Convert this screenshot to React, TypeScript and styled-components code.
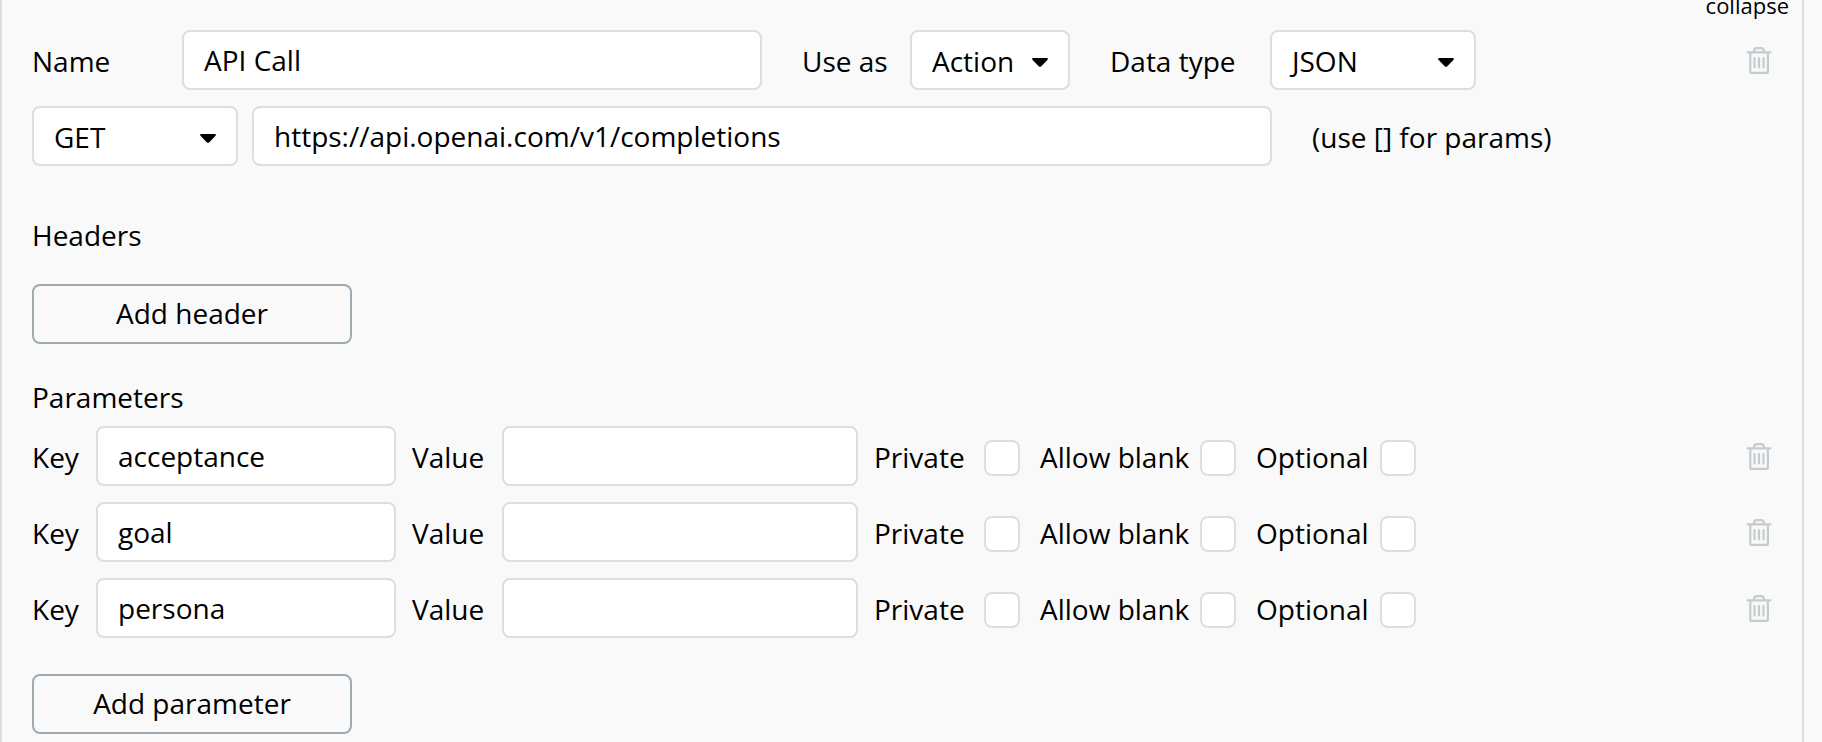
import React from "react";
import styled, { createGlobalStyle } from "styled-components";

const GlobalStyle = createGlobalStyle`
  * { box-sizing: border-box; }
  body {
    margin: 0;
    background: #f9f9f9;
    color: #000;
    font: 28px/38px "Open Sans", "Noto Sans", sans-serif;
    overflow: hidden;
  }
  input, button { font: inherit; color: inherit; }
`;

const Panel = styled.main`
  width: 1804px;
  height: 742px;
  padding: 0 30px;
  overflow: hidden;
  background: #f9f9f9;
  border: solid #dedede;
  border-width: 0 2px;
`;

const TopBar = styled.div`
  display: flex;
  justify-content: flex-end;
  height: 30px;
  margin-right: -17px;
`;

const Collapse = styled.a`
  margin-top: -10px;
  font-size: 22px;
  line-height: 30px;
`;

const Row = styled.div`
  display: flex;
  align-items: center;
  height: 60px;
  margin-bottom: 16px;
`;

const Label = styled.label<{ $width?: number; $indent?: number }>`
  flex: none;
  width: ${(p) => (p.$width ? `${p.$width}px` : "auto")};
  padding: 2px 0 0 ${(p) => p.$indent ?? 0}px;
  white-space: nowrap;
`;

const TextInput = styled.input<{ $width: number }>`
  flex: none;
  width: ${(p) => p.$width}px;
  height: 60px;
  padding: 0 20px;
  background: #fff;
  border: 2px solid #dedede;
  border-radius: 8px;
  outline: none;
`;

const SelectBox = styled.div<{ $width: number }>`
  display: flex;
  flex: none;
  align-items: center;
  justify-content: space-between;
  width: ${(p) => p.$width}px;
  height: 60px;
  padding: 2px 20px 0;
  background: #fff;
  border: 2px solid #dedede;
  border-radius: 8px;
`;

const UrlInput = styled(TextInput)`
  margin-left: 14px;
`;

const CheckBox = styled.span`
  flex: none;
  width: 36px;
  height: 36px;
  margin-top: 4px;
  background: #fff;
  border: 2px solid #dedede;
  border-radius: 8px;
`;

const DeleteButton = styled.button`
  display: flex;
  flex: none;
  margin: 2px 0 0 auto;
  padding: 0;
  background: none;
  border: 0;
`;

const SectionTitle = styled.h2`
  margin: 0;
  font-size: 28px;
  font-weight: 400;
  line-height: 38px;
`;

const HeadersSection = styled.section`
  padding-top: 34px;
`;

const ParametersSection = styled.section`
  padding-top: 34px;
`;

const ParameterList = styled.div`
  padding-top: 10px;
`;

const OutlineButton = styled.button<{ $gap: number }>`
  display: block;
  width: 320px;
  height: 60px;
  margin-top: ${(p) => p.$gap}px;
  padding: 0 0 2px;
  background: transparent;
  border: 2px solid #9eabb2;
  border-radius: 8px;
`;

const CaretIcon = styled.svg`
  flex: none;
  margin-top: 3px;
`;

const Caret = () => (
  <CaretIcon width="16" height="9" viewBox="0 0 16 9">
    <path d="M.8 0h14.4q1 .6.4 1.700L9.300 8.200Q8 9.400 6.700 8.200L.4 1.700Q-.2.6.8 0z" fill="#000" />
  </CaretIcon>
);

const Trash = () => (
  <svg width="26" height="28" viewBox="0 0 26 28" fill="none" stroke="#c3cdd0" strokeWidth="2.2" strokeLinecap="round" strokeLinejoin="round">
    <path d="M1.500 5.300h23M8 5V3.800Q8.500 1.200 11 1.200h4Q17.500 1.200 18 3.800V5M4.300 6v18.400q0 1.500 1.500 1.500h14.600q1.500 0 1.500-1.500V6" />
    <path d="M8.500 11v9.500M13 11v9.500M17.500 11v9.500" />
  </svg>
);

const Select = ({ value, width }: { value: string; width: number }) => (
  <SelectBox $width={width}>
    {value}
    <Caret />
  </SelectBox>
);

const ParameterRow = ({ name }: { name: string }) => (
  <Row>
    <Label $width={64}>Key</Label>
    <TextInput $width={300} defaultValue={name} />
    <Label $width={106} $indent={16}>Value</Label>
    <TextInput $width={356} />
    <Label $width={126} $indent={16}>Private</Label>
    <CheckBox />
    <Label $width={180} $indent={20}>Allow blank</Label>
    <CheckBox />
    <Label $width={144} $indent={20}>Optional</Label>
    <CheckBox />
    <DeleteButton><Trash /></DeleteButton>
  </Row>
);

export default function App() {
  return (
    <>
      <GlobalStyle />
      <Panel>
        <TopBar>
          <Collapse>collapse</Collapse>
        </TopBar>
        <Row>
          <Label $width={150}>Name</Label>
          <TextInput $width={580} defaultValue="API Call" />
          <Label $width={148} $indent={40}>Use as</Label>
          <Select value="Action" width={160} />
          <Label $width={200} $indent={40}>Data type</Label>
          <Select value="JSON" width={206} />
          <DeleteButton><Trash /></DeleteButton>
        </Row>
        <Row>
          <Select value="GET" width={206} />
          <UrlInput $width={1020} defaultValue="https://api.openai.com/v1/completions" />
          <Label $indent={40}>(use [] for params)</Label>
        </Row>
        <HeadersSection>
          <SectionTitle>Headers</SectionTitle>
          <OutlineButton $gap={30}>Add header</OutlineButton>
        </HeadersSection>
        <ParametersSection>
          <SectionTitle>Parameters</SectionTitle>
          <ParameterList>
            {["acceptance", "goal", "persona"].map((name) => (
              <ParameterRow key={name} name={name} />
            ))}
          </ParameterList>
          <OutlineButton $gap={36}>Add parameter</OutlineButton>
        </ParametersSection>
      </Panel>
    </>
  );
}
